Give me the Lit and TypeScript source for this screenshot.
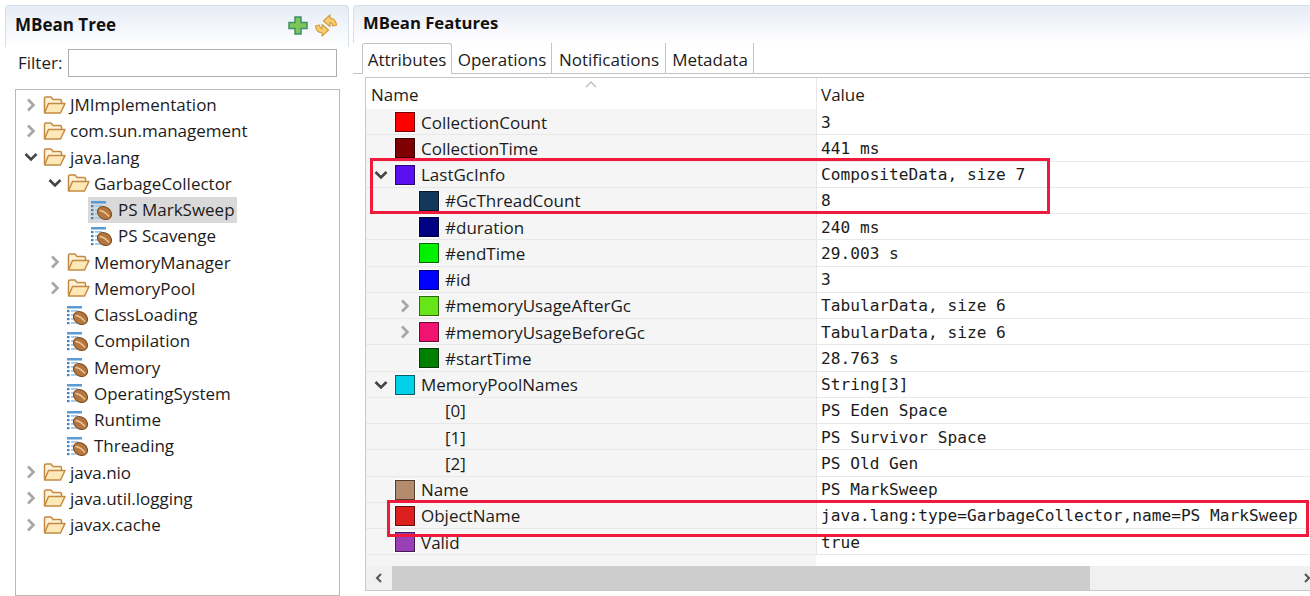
import {LitElement, html, css, svg} from 'lit';
import {customElement} from 'lit/decorators.js';

const chevronRight = html`<svg width="12" height="14" viewBox="0 0 12 14"><path d="M3 1.500 8.500 7 3 12.500" fill="none" stroke="#a6a6a6" stroke-width="2.600"/></svg>`;
const chevronDown = html`<svg width="14" height="12" viewBox="0 0 14 12"><path d="M1.500 3 7 8.500 12.500 3" fill="none" stroke="#444" stroke-width="2.600"/></svg>`;

const folder = html`<svg width="23" height="20" viewBox="0 0 23 20">
  <path d="M1.500 17.500V3.500q0-1.500 1.500-1.500h5l2 2.500h7q1.500 0 1.500 1.500V8" fill="#fdf1d6" stroke="#c48a42" stroke-width="1.500"/>
  <path d="M1.500 18 5.500 8.500H22L17.500 18Z" fill="#fde8b8" stroke="#c48a42" stroke-width="1.500" stroke-linejoin="round"/>
</svg>`;

const bean = html`<svg width="21" height="20" viewBox="0 0 21 20">
  <rect x="0" y="1" width="15" height="2.500" fill="#5b9bd5"/>
  ${[5, 9, 13, 17].map(
    (y) => svg`<rect x="0" y=${y} width="2.500" height="2.200" fill="#3d85c6"/><rect x="4" y=${y} width="7" height="1.800" fill="#a5c8e6"/>`
  )}
  <ellipse cx="13.500" cy="13" rx="7.500" ry="6" transform="rotate(35 13.500 13)" fill="#b5773f" stroke="#7a4a20"/>
  <path d="M8.500 10.500q5 .5 9.500 6" fill="none" stroke="#ecc89a" stroke-width="1.300"/>
</svg>`;

const plus = html`<svg width="20" height="19" viewBox="0 0 20 19">
  <path d="M7 1h6v5.500h6v6h-6V18H7v-5.500H1v-6h6Z" fill="#7fc65a" stroke="#3f8f6a" stroke-width="1.500"/>
</svg>`;

const refreshArrow = svg`<path d="M8.500 7 15 .8v3.400c3.500.2 6 2.500 6.500 6.800l-3.800 1c-.4-2.300-1.300-3.600-2.700-3.800v4.300Z" fill="#f6cd70" stroke="#d29a38" stroke-width="1.100" stroke-linejoin="round"/>`;
const refresh = html`<svg width="22" height="23" viewBox="0 0 22 23">
  ${refreshArrow}
  <g transform="rotate(180 11 11.500)">${refreshArrow}</g>
</svg>`;

interface TreeRow {
  label: string;
  depth: number;
  kind: 'folder' | 'bean';
  arrow?: 'closed' | 'open';
  selected?: boolean;
}

const TREE: TreeRow[] = [
  {label: 'JMImplementation', depth: 0, kind: 'folder', arrow: 'closed'},
  {label: 'com.sun.management', depth: 0, kind: 'folder', arrow: 'closed'},
  {label: 'java.lang', depth: 0, kind: 'folder', arrow: 'open'},
  {label: 'GarbageCollector', depth: 1, kind: 'folder', arrow: 'open'},
  {label: 'PS MarkSweep', depth: 2, kind: 'bean', selected: true},
  {label: 'PS Scavenge', depth: 2, kind: 'bean'},
  {label: 'MemoryManager', depth: 1, kind: 'folder', arrow: 'closed'},
  {label: 'MemoryPool', depth: 1, kind: 'folder', arrow: 'closed'},
  {label: 'ClassLoading', depth: 1, kind: 'bean'},
  {label: 'Compilation', depth: 1, kind: 'bean'},
  {label: 'Memory', depth: 1, kind: 'bean'},
  {label: 'OperatingSystem', depth: 1, kind: 'bean'},
  {label: 'Runtime', depth: 1, kind: 'bean'},
  {label: 'Threading', depth: 1, kind: 'bean'},
  {label: 'java.nio', depth: 0, kind: 'folder', arrow: 'closed'},
  {label: 'java.util.logging', depth: 0, kind: 'folder', arrow: 'closed'},
  {label: 'javax.cache', depth: 0, kind: 'folder', arrow: 'closed'},
];

interface AttrRow {
  name: string;
  value: string;
  depth: number;
  color?: string;
  arrow?: 'closed' | 'open';
}

const ATTRS: AttrRow[] = [
  {name: 'CollectionCount', value: '3', depth: 0, color: '#ff0000'},
  {name: 'CollectionTime', value: '441 ms', depth: 0, color: '#7f0000'},
  {name: 'LastGcInfo', value: 'CompositeData, size 7', depth: 0, color: '#5a10f0', arrow: 'open'},
  {name: '#GcThreadCount', value: '8', depth: 1, color: '#14375c'},
  {name: '#duration', value: '240 ms', depth: 1, color: '#000080'},
  {name: '#endTime', value: '29.003 s', depth: 1, color: '#00f000'},
  {name: '#id', value: '3', depth: 1, color: '#0000ff'},
  {name: '#memoryUsageAfterGc', value: 'TabularData, size 6', depth: 1, color: '#66e619', arrow: 'closed'},
  {name: '#memoryUsageBeforeGc', value: 'TabularData, size 6', depth: 1, color: '#f0136f', arrow: 'closed'},
  {name: '#startTime', value: '28.763 s', depth: 1, color: '#008000'},
  {name: 'MemoryPoolNames', value: 'String[3]', depth: 0, color: '#00d0e8', arrow: 'open'},
  {name: '[0]', value: 'PS Eden Space', depth: 1},
  {name: '[1]', value: 'PS Survivor Space', depth: 1},
  {name: '[2]', value: 'PS Old Gen', depth: 1},
  {name: 'Name', value: 'PS MarkSweep', depth: 0, color: '#b38b6d'},
  {name: 'ObjectName', value: 'java.lang:type=GarbageCollector,name=PS MarkSweep', depth: 0, color: '#dc1f1f'},
  {name: 'Valid', value: 'true', depth: 0, color: '#9a3fb5'},
];

const TABS = ['Attributes', 'Operations', 'Notifications', 'Metadata'];
const TAB_WIDTHS = [90, 100, 114, 88];

@customElement('mbean-tree')
export class MBeanTree extends LitElement {
  static styles = css`
    :host {
      display: flex;
      flex-direction: column;
      width: 344px;
      height: 100%;
      font-family: 'Open Sans', sans-serif;
      font-size: 17px;
      color: #1c1c1c;
    }
    .head {
      display: flex;
      align-items: center;
      height: 39px;
      padding: 0 11px 2px 9px;
      box-sizing: content-box;
      margin-bottom: -2px;
      border: 1px solid #d6e0ea;
      border-bottom: none;
      border-radius: 4px 4px 0 0;
      background: linear-gradient(#e6ecf5, #ffffff);
    }
    .title {
      flex: 1;
      font-weight: 700;
      font-size: 17px;
      color: #111;
      position: relative;
      top: -1px;
    }
    .tools {
      display: flex;
      align-items: center;
      gap: 7px;
    }
    svg {
      display: block;
      flex: none;
    }
    .filter {
      display: flex;
      align-items: center;
      gap: 6px;
      height: 28px;
      margin-top: 4px;
      padding: 0 12px 0 13px;
    }
    .filter span {
      position: relative;
      top: -1px;
    }
    .filter input {
      flex: 1;
      min-width: 0;
      height: 28px;
      box-sizing: border-box;
      border: 1px solid #adadad;
      background: #fff;
    }
    .tree {
      flex: 1;
      margin: 12px 9px 0 10px;
      padding-top: 1.500px;
      border: 1px solid #b9b9b9;
      background: #fff;
    }
    .row {
      display: flex;
      align-items: center;
      height: 26.250px;
      white-space: nowrap;
    }
    .arrow {
      display: flex;
      justify-content: center;
      width: 18px;
      margin-left: 6px;
      margin-right: 3px;
    }
    .label {
      margin-left: 4px;
      padding-right: 2px;
    }
    .selected {
      display: flex;
      align-items: center;
      background: #d9d9d9;
      height: 26px;
      padding-left: 3px;
      margin-left: -3px;
    }
    .bean .label {
      margin-left: 6px;
    }
  `;

  private renderRow(row: TreeRow) {
    const icon = row.kind === 'folder' ? folder : bean;
    const arrow = row.arrow === 'open' ? chevronDown : row.arrow === 'closed' ? chevronRight : '';
    const body = html`${icon}<span class="label">${row.label}</span>`;
    return html`
      <div class="row ${row.kind}" style="padding-left: ${row.depth * 24}px">
        <span class="arrow">${arrow}</span>
        ${row.selected ? html`<span class="selected">${body}</span>` : body}
      </div>
    `;
  }

  render() {
    return html`
      <div class="head">
        <span class="title">MBean Tree</span>
        <span class="tools">${plus}${refresh}</span>
      </div>
      <div class="filter"><span>Filter:</span><input /></div>
      <div class="tree">${TREE.map((row) => this.renderRow(row))}</div>
    `;
  }
}

@customElement('mbean-features')
export class MBeanFeatures extends LitElement {
  static styles = css`
    :host {
      display: flex;
      flex-direction: column;
      flex: 1;
      min-width: 0;
      height: 100%;
      font-family: 'Open Sans', sans-serif;
      font-size: 17px;
      color: #1c1c1c;
    }
    svg {
      display: block;
      flex: none;
    }
    .head {
      display: flex;
      align-items: center;
      height: 33px;
      padding: 0 0 4px 9px;
      border: 1px solid #d6e0ea;
      border-bottom: none;
      border-right: none;
      border-radius: 4px 0 0 0;
      background: linear-gradient(#e6ecf5, #ffffff);
      font-weight: 700;
      font-size: 16.700px;
      color: #111;
    }
    .tabs {
      display: flex;
      height: 31px;
      padding-left: 9px;
      box-sizing: border-box;
      border-bottom: 1px solid #c4c4c4;
    }
    .tab {
      display: flex;
      align-items: center;
      justify-content: center;
      box-sizing: border-box;
      height: 30px;
      padding: 2px 0 0 1px;
      border-right: 1px solid #c4c4c4;
    }
    .tab.active {
      height: 31px;
      padding: 1px 0 0;
      background: #fff;
      border: 1px solid #c4c4c4;
      border-bottom: none;
      border-radius: 3px 3px 0 0;
    }
    .table {
      position: relative;
      flex: 1;
      display: flex;
      flex-direction: column;
      margin: 3px 0 5px 12px;
      border: 1px solid #c8c8c8;
      border-right: none;
      background: #fff;
    }
    .cols {
      flex: 1;
      display: grid;
      grid-template-columns: 450px 1fr;
      grid-auto-rows: min-content;
      background: linear-gradient(90deg, #f5f5f5 450px, #fff 450px);
    }
    .hcell {
      display: flex;
      align-items: center;
      height: 31px;
      padding: 2px 0 0 5px;
      box-sizing: border-box;
      background: #fff;
      position: relative;
    }
    .hcell + .hcell,
    .value {
      border-left: 1px solid #e6e6e6;
    }
    .hcell + .hcell {
      padding-left: 4px;
    }
    .caret {
      position: absolute;
      left: 219px;
      top: 3px;
    }
    .name,
    .value {
      display: flex;
      align-items: center;
      box-sizing: border-box;
      height: 26.250px;
      border-bottom: 1px solid #e8e8e8;
      white-space: nowrap;
    }
    .name {
      padding-top: 1px;
    }
    .value {
      padding: 1px 0 0 4px;
      background: #fff;
      font-family: 'DejaVu Sans Mono', monospace;
      font-size: 16.160px;
    }
    .name .arrow {
      display: flex;
      justify-content: center;
      width: 18px;
      margin-left: 6px;
      margin-right: 5px;
    }
    .swatch {
      box-sizing: border-box;
      width: 20px;
      height: 20px;
      margin-right: 6px;
      border: 1px solid rgba(0, 0, 0, 0.55);
      box-shadow: 0 0 0 1px #fff;
    }
    .gap {
      width: 26px;
    }
    .bar {
      display: flex;
      align-items: center;
      height: 24px;
      background: #f0f0f0;
    }
    .bar .btn {
      display: flex;
      justify-content: center;
      width: 26px;
    }
    .thumb {
      width: 698px;
      height: 24px;
      background: #cdcdcd;
    }
    .spacer {
      flex: 1;
    }
    .mark {
      position: absolute;
      box-sizing: border-box;
      border: 3px solid #f01a3c;
      pointer-events: none;
    }
    .mark.gc {
      left: 4px;
      top: 80px;
      width: 680px;
      height: 56px;
    }
    .mark.object {
      left: 21px;
      top: 422px;
      width: 922px;
      height: 37px;
    }
  `;

  private renderName(row: AttrRow) {
    const arrow = row.arrow === 'open' ? chevronDown : row.arrow === 'closed' ? chevronRight : '';
    return html`
      <div class="name" style="padding-left: ${row.depth * 24}px">
        <span class="arrow">${arrow}</span>
        ${row.color
          ? html`<span class="swatch" style="background: ${row.color}"></span>`
          : html`<span class="gap"></span>`}
        <span>${row.name}</span>
      </div>
    `;
  }

  render() {
    return html`
      <div class="head">MBean Features</div>
      <div class="tabs">
        ${TABS.map(
          (tab, i) => html`<div
            class="tab ${i === 0 ? 'active' : ''}"
            style="width: ${TAB_WIDTHS[i]}px"
          >
            ${tab}
          </div>`
        )}
      </div>
      <div class="table">
        <div class="cols">
          <div class="hcell">
            Name
            <svg class="caret" width="12" height="7" viewBox="0 0 12 7">
              <path d="M1 6 6 1l5 5" fill="none" stroke="#b5b5b5" stroke-width="1.200" />
            </svg>
          </div>
          <div class="hcell">Value</div>
          ${ATTRS.map(
            (row) => html`${this.renderName(row)}<div class="value">${row.value}</div>`
          )}
        </div>
        <div class="bar">
          <span class="btn">
            <svg width="8" height="12" viewBox="0 0 8 12"><path d="M6 2 2 6l4 4" fill="none" stroke="#555" stroke-width="2" /></svg>
          </span>
          <div class="thumb"></div>
          <span class="spacer"></span>
          <svg width="6" height="12" viewBox="0 0 6 12"><path d="M1 2l4 4-4 4" fill="none" stroke="#555" stroke-width="2" /></svg>
        </div>
        <div class="mark gc"></div>
        <div class="mark object"></div>
      </div>
    `;
  }
}

@customElement('app-root')
export class AppRoot extends LitElement {
  static styles = css`
    :host {
      display: flex;
      gap: 4px;
      box-sizing: border-box;
      width: 1310px;
      height: 596px;
      padding: 5px 0 0 5px;
      background: #fff;
      overflow: hidden;
    }
  `;

  render() {
    return html`<mbean-tree></mbean-tree><mbean-features></mbean-features>`;
  }
}
